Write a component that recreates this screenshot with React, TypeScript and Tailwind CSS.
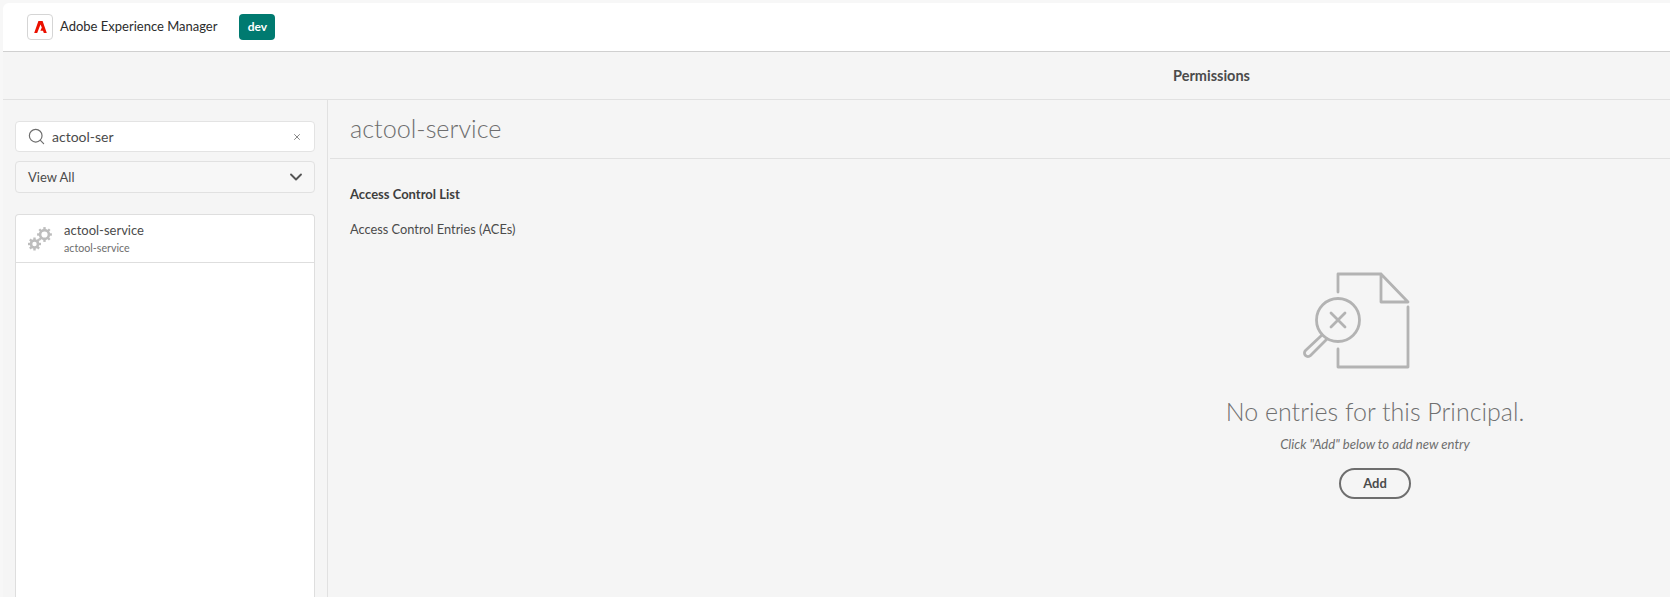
import { ChevronDown, Search, X } from "lucide-react";

function AdobeLogo() {
  return (
    <svg viewBox="0 0 12.6 12" className="h-[12px] w-[13px]">
      <path fill="#eb1000" d="M4.200 0H8.400L12.600 12H9.600L8.800 9.800H6.200L7.600 6.400 6.300 3.400 3 12H0z" />
    </svg>
  );
}

function Gears() {
  const teeth = [0, 45, 90, 135];
  const gear = (cx: number, cy: number, r: number) => (
    <g>
      {teeth.map((a) => (
        <rect key={a} x={cx - 1.2} y={cy - r - 3} width={2.4} height={2 * r + 6} fill="#bdbdbd" transform={`rotate(${a} ${cx} ${cy})`} />
      ))}
      <circle cx={cx} cy={cy} r={r} fill="#ffffff" stroke="#bdbdbd" strokeWidth={2.6} />
    </g>
  );
  return (
    <svg viewBox="0 0 26 26" className="h-[26px] w-[26px] shrink-0">
      {gear(17.5, 8.5, 4.4)}
      {gear(7.5, 18, 3.5)}
    </svg>
  );
}

function EmptyIcon() {
  return (
    <svg viewBox="0 0 150 102" className="h-[102px] w-[150px]" fill="none" stroke="#b3b3b3" strokeWidth={2.8} strokeLinejoin="round" strokeLinecap="round">
      <path d="M38 22V4H81L108 32H81V4" />
      <path d="M108 37V97H38V79" />
      <circle cx={38} cy={50} r={21.5} />
      <path d="M31 43l14 14M45 43l-14 14" />
      <path d="M22 65 5.500 80.500a3.400 3.400 0 0 0 5 5L27 69" />
    </svg>
  );
}

export default function App() {
  return (
    <div className="h-[597px] w-[1670px] overflow-hidden bg-[#f7f7f7] pl-[3px] pt-[3px] font-['Lato','Noto_Sans',sans-serif] text-[#4b4b4b]">
      <div className="flex h-[594px] w-[2417px] flex-col">
        <header className="flex h-[49px] shrink-0 items-center rounded-tl-[6px] border-b border-[#d0d0d0] bg-white pl-6">
          <div className="flex h-[26px] w-[26px] items-center justify-center rounded-[4px] border border-[#d5d5d5] bg-white">
            <AdobeLogo />
          </div>
          <span className="ml-[7px] text-[13px] text-[#2c2c2c]">Adobe Experience Manager</span>
          <span className="ml-[22px] flex h-[26px] w-9 items-center justify-center rounded-[4px] bg-[#007a70] text-[12px] font-bold text-white">dev</span>
        </header>
        <div className="flex h-[48px] shrink-0 items-center justify-center border-b border-[#e1e1e1] bg-[#f5f5f5]">
          <span className="text-[14.500px] font-bold text-[#4b4b4b]">Permissions</span>
        </div>
        <div className="flex min-h-0 flex-1 bg-[#f5f5f5]">
          <aside className="flex w-[325px] shrink-0 flex-col border-r border-[#e1e1e1] pl-3 pr-3 pt-[21px]">
            <div className="flex h-[31px] w-[300px] items-center rounded-[4px] border border-[#e3e3e3] bg-white pl-[11px] pr-3 text-[14px]">
              <Search className="h-[19px] w-[19px] text-[#6e6e6e]" strokeWidth={1.5} />
              <span className="ml-[6px] flex-1">actool-ser</span>
              <X className="h-[10px] w-[10px] text-[#707070]" strokeWidth={2} />
            </div>
            <div className="mt-[9px] flex h-[32px] w-[300px] items-center justify-between rounded-[4px] border border-[#e1e1e1] bg-[#f7f7f7] pl-3 pr-[8px] text-[13px]">
              <span className="pt-px">View All</span>
              <ChevronDown className="h-[20px] w-[20px] text-[#555555]" strokeWidth={2.25} />
            </div>
            <div className="mt-[21px] w-[300px] flex-1 rounded-t-[4px] border border-b-0 border-[#dedede] bg-white">
              <div className="flex h-[48px] items-center border-b border-[#dedede] pl-[11px]">
                <Gears />
                <div className="ml-[11px]">
                  <div className="text-[13px] leading-[17px]">actool-service</div>
                  <div className="text-[10.700px] leading-[17px] text-[#6e6e6e]">actool-service</div>
                </div>
              </div>
            </div>
          </aside>
          <main className="min-w-0 flex-1 pl-[2px]">
            <div className="flex h-[59px] items-center border-b border-[#e1e1e1] pl-5">
              <h1 className="text-[25.200px] font-light text-[#6e6e6e]">actool-service</h1>
            </div>
            <div className="pl-5 pt-[26px]">
              <div className="text-[13px] font-bold leading-[18px] text-[#3e3e3e]">Access Control List</div>
              <div className="mt-[17px] text-[12.800px] leading-[18px]">Access Control Entries (ACEs)</div>
            </div>
            <div className="flex flex-col items-center pt-[32px]">
              <EmptyIcon />
              <div className="mt-[23px] text-[25px] font-light leading-[32px] text-[#707070]">No entries for this Principal.</div>
              <div className="mt-[9px] text-[13.100px] italic leading-[16px] text-[#6e6e6e]">Click "Add" below to add new entry</div>
              <button className="mt-[16px] flex h-[31px] w-[72px] items-center justify-center rounded-full border-2 border-[#6e6e6e] text-[13px] font-bold text-[#4b4b4b]">Add</button>
            </div>
          </main>
        </div>
      </div>
    </div>
  );
}
